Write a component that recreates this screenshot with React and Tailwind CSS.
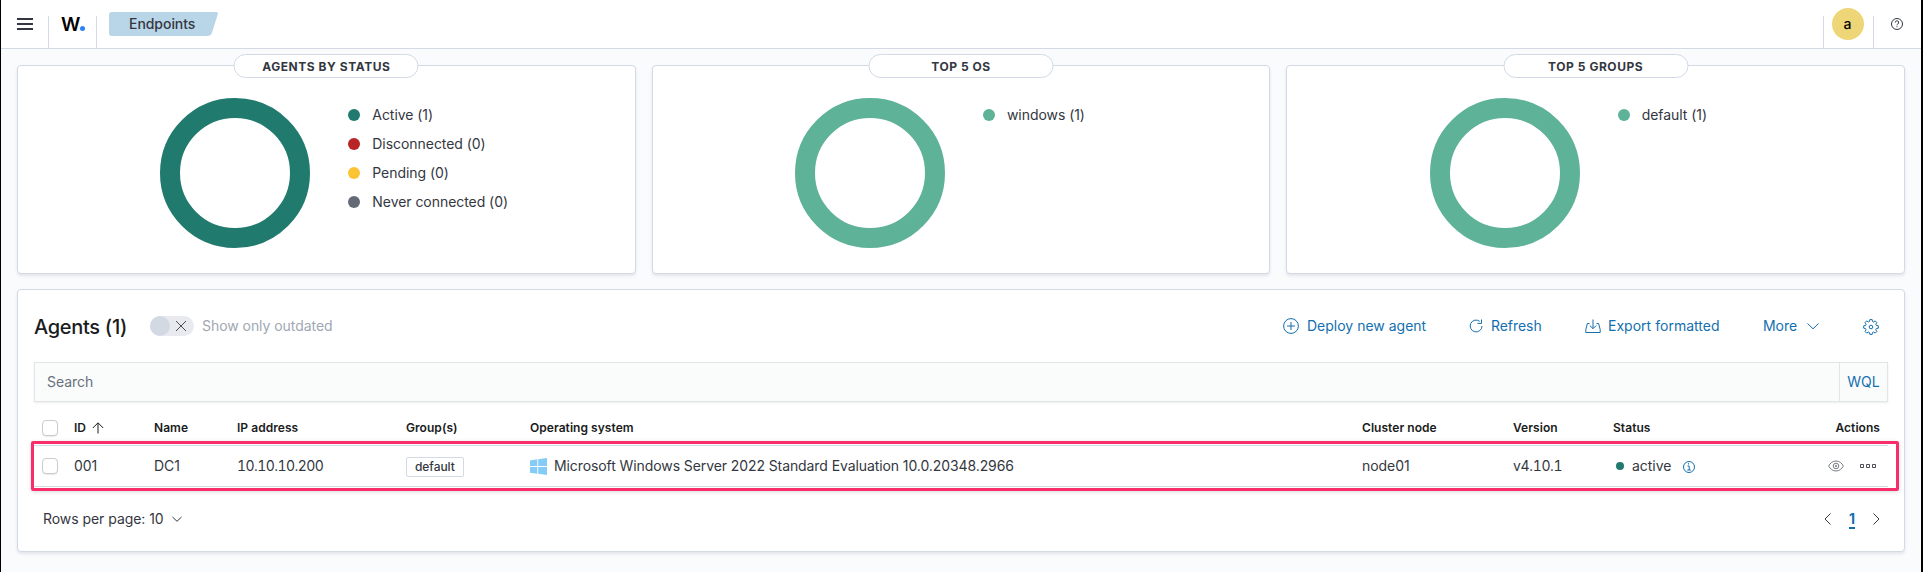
import React from "react";

const summaries = [
  {
    title: "Agents by status",
    ring: "#207a6e",
    legend: [
      { label: "Active (1)", dot: "bg-[#207a6e]" },
      { label: "Disconnected (0)", dot: "bg-[#b92427]" },
      { label: "Pending (0)", dot: "bg-[#fcc434]" },
      { label: "Never connected (0)", dot: "bg-[#656a77]" },
    ],
  },
  { title: "Top 5 OS", ring: "#5eb297", legend: [{ label: "windows (1)", dot: "bg-[#5eb297]" }] },
  { title: "Top 5 groups", ring: "#5eb297", legend: [{ label: "default (1)", dot: "bg-[#5eb297]" }] },
];

function Icon({ children, className = "" }) {
  return (
    <svg width="16" height="16" viewBox="0 0 16 16" fill="none" stroke="currentColor" className={"shrink-0 " + className}>
      {children}
    </svg>
  );
}

function SummaryCard({ title, ring, legend }) {
  return (
    <section className="relative flex h-[209px] rounded-[4px] border border-[#d3dae6] bg-white pt-[32px] shadow-[0_2px_3px_rgba(90,100,130,0.14)]">
      <h2 className="absolute top-[-12px] left-1/2 flex h-6 w-[30%] -translate-x-1/2 items-center justify-center rounded-full border border-[#d3dae6] bg-white pt-px text-[12px] font-bold tracking-[0.55px] text-[#343741] uppercase">
        {title}
      </h2>
      <svg width="150" height="150" viewBox="0 0 150 150" className="ml-[142.300px] shrink-0">
        <circle cx="75" cy="75" r="65" fill="none" stroke={ring} strokeWidth="20" />
      </svg>
      <ul className="mt-[2px] ml-[38px]">
        {legend.map((l) => (
          <li key={l.label} className="flex h-[29px] items-center gap-3">
            <span className={"size-3 rounded-full " + l.dot} />
            <span>{l.label}</span>
          </li>
        ))}
      </ul>
    </section>
  );
}

function Checkbox() {
  return <span className="block size-4 rounded-[4px] border border-[#c9cbcd] bg-white shadow-[0_1px_1px_rgba(0,0,0,0.08)]" />;
}

const columns =
  "grid grid-cols-[32px_80px_83px_169px_124px_832px_151px_100px_1fr] items-center pl-2 pr-2";

export default function App() {
  return (
    <div className="h-[572px] w-full overflow-hidden border-r-2 border-l border-black bg-[#fafbfd] font-['Inter',sans-serif] text-[14px] leading-5 tracking-[-0.05px] text-[#343741]">
      <header className="flex h-[49px] items-stretch border-b border-[#d3dae6] bg-white">
        <div className="flex w-[47px] items-center justify-start pl-4">
          <svg width="16" height="12" viewBox="0 0 16 12" fill="#343741">
            <path d="M0 0h16v2H0zM0 5h16v2H0zM0 10h16v2H0z" />
          </svg>
        </div>
        <div className="mt-4 w-px bg-[#d3dae6]" />
        <div className="flex w-[47px] items-center pl-[12px]">
          <span className="text-[19px] leading-none font-semibold tracking-[-0.5px] text-black">W</span>
          <span className="mt-[9px] size-[5px] shrink-0 rounded-full bg-[#2d82f7]" />
        </div>
        <div className="mt-4 w-px bg-[#d3dae6]" />
        <nav className="relative mt-3 ml-3 flex h-6 w-[109px] items-center">
          <svg width="109" height="24" viewBox="0 0 109 24" className="absolute inset-0" fill="#b9d6e8">
            <path d="M3 0h104q2.600 0 1.800 2.300l-6 19Q101.800 24 99 24H3q-3 0-3-3V3q0-3 3-3z" />
          </svg>
          <span className="relative pl-5 font-medium">Endpoints</span>
        </nav>
        <div className="ml-auto flex">
          <div className="mt-4 w-px bg-[#d3dae6]" />
          <div className="flex w-[49px] items-center justify-center pr-[2px]">
            <span className="flex size-8 items-center justify-center rounded-full bg-[#eed678] font-medium text-black">a</span>
          </div>
          <div className="mt-4 w-px bg-[#d3dae6]" />
          <div className="flex w-[47px] items-center justify-center pr-[2px]">
            <Icon>
              <circle cx="8" cy="8" r="5.500" />
              <path d="M6.300 6.500a1.700 1.700 0 1 1 2.500 1.500c-.6.350-.8.600-.8 1.300M8 10.300v1" />
            </Icon>
          </div>
        </div>
      </header>

      <main className="px-4 pt-4">
        <div className="grid grid-cols-3 gap-4">
          {summaries.map((s) => (
            <SummaryCard key={s.title} {...s} />
          ))}
        </div>

        <section className="mt-[15px] h-[263px] rounded-[4px] border border-[#d3dae6] bg-white px-4 shadow-[0_2px_3px_rgba(90,100,130,0.14)]">
          <div className="flex h-[72px] items-center">
            <h1 className="mt-px w-[116px] text-[20px] font-medium tracking-[-0.3px] text-[#1a1c21]">Agents (1)</h1>
            <div className="flex h-5 w-11 items-center rounded-full bg-[#e8eaef]">
              <span className="size-5 rounded-full bg-[#d3d9e3]" />
              <Icon className="ml-[3px] text-[#4a4d55]">
                <path d="M3 3l10 10M13 3L3 13" />
              </Icon>
            </div>
            <span className="ml-2 text-[#a0a7b3]">Show only outdated</span>

            <div className="ml-auto flex items-center text-[#146fae]">
              <button className="flex items-center gap-2">
                <Icon>
                  <circle cx="8" cy="8" r="7.400" />
                  <path d="M8 4v8M4 8h8" />
                </Icon>
                <span className="w-[161px] text-left tracking-normal">Deploy new agent</span>
              </button>
              <button className="flex items-center gap-[7px]">
                <Icon>
                  <path d="M11.700 3.300A5.900 5.900 0 1 0 14 8M13.500 1.500v3.900H9.500" />
                </Icon>
                <span className="w-[94px] text-left">Refresh</span>
              </button>
              <button className="flex items-center gap-[7px]">
                <Icon>
                  <path d="M8 1.500v9M4.800 7.500L8 10.700l3.200-3.200M4.500 5.500H2.400L.8 11.500v3h14.400v-3l-1.600-6h-2.100" />
                </Icon>
                <span className="w-[155px] text-left tracking-[0.02px]">Export formatted</span>
              </button>
              <button className="flex items-center">
                <span className="w-[42px] text-left">More</span>
                <Icon>
                  <path d="M2.500 5.500L8 10.800l5.500-5.300" />
                </Icon>
              </button>
              <button className="mt-[2px] mr-[9px] ml-[42px]">
                <Icon>
                  <path
                    d="M6.800.6h2.400l.3 1.900 1.100.5 1.600-1.100 1.700 1.700L12.800 5.200l.5 1.200 2 .4v2.400l-2 .4-.5 1.200 1.100 1.600-1.700 1.700-1.600-1.100-1.100.5-.3 1.900H6.800l-.4-1.900-1.100-.5-1.600 1.100L2 12.400l1.100-1.600-.5-1.200-1.900-.4V6.800l1.900-.4.5-1.200L2 3.600l1.700-1.700L5.300 3l1.100-.5z"
                    strokeLinejoin="round"
                  />
                  <circle cx="8" cy="8" r="1.800" />
                </Icon>
              </button>
            </div>
          </div>

          <div className="flex h-10 border border-[#e2e6e8] bg-[#fafcfc] shadow-[0_1px_2px_rgba(0,0,0,0.08)]">
            <div className="flex grow items-center pl-3 text-[#69707d]">Search</div>
            <button className="flex w-12 items-center justify-center border-l border-[#e2e6e8] text-[#146fae]">WQL</button>
          </div>

          <div className={columns + " mt-[8px] h-[35px] pt-px text-[12px] font-semibold tracking-[0.05px] text-[#1a1c21]"}>
            <Checkbox />
            <span className="flex items-center">
              ID
              <Icon className="ml-[4px]">
                <path d="M8 13.500V3M2.800 8L8 2.800 13.200 8" />
              </Icon>
            </span>
            <span>Name</span>
            <span>IP address</span>
            <span>Group(s)</span>
            <span>Operating system</span>
            <span>Cluster node</span>
            <span>Version</span>
            <span className="flex justify-between">
              <span>Status</span>
              <span>Actions</span>
            </span>
          </div>

          <div className={columns + " relative h-[42px] border-y border-[#d3dae6]"}>
            <div className="absolute -top-[5px] -right-[11px] -bottom-[5px] -left-[3px] rounded-[2px] border-3 border-[#fa2d6b] shadow-[0_1px_4px_rgba(0,0,0,0.15)]" />
            <Checkbox />
            <span>001</span>
            <span>DC1</span>
            <span className="tracking-[-0.55px] tabular-nums">10.10.10.200</span>
            <span className="flex">
              <span className="mt-[1px] h-5 rounded-[2px] border border-[#d3dae6] px-2 text-[12px] leading-[18px] font-medium">default</span>
            </span>
            <span className="flex items-center gap-[7px] tracking-[-0.09px]">
              <svg width="17" height="17" viewBox="0 0 17 17" fill="#84cbf5">
                <path d="M0 2.400L7.300 1.300V8H0zM8.200 1.200L17 0v8H8.200zM0 8.900h7.300v6.800L0 14.700zM8.200 8.900H17V17l-8.800-1.200z" />
              </svg>
              Microsoft Windows Server 2022 Standard Evaluation 10.0.20348.2966
            </span>
            <span>node01</span>
            <span className="tracking-[-0.35px] tabular-nums">v4.10.1</span>
            <span className="flex items-center pl-[3px]">
              <span className="size-2 rounded-full bg-[#207a6e]" />
              <span className="w-[57px] pl-2">active</span>
              <Icon className="mt-[2px] text-[#146fae]">
                <circle cx="8" cy="8" r="5.500" />
                <path d="M6.500 7h1.700v4M6.300 11h3.600M7.500 4.200v1.300" />
              </Icon>
              <span className="ml-auto flex gap-4 pr-1 text-[#7b7e85]">
                <Icon>
                  <path d="M.6 8C2.200 5 4.900 3 8 3s5.800 2 7.400 5c-1.600 3-4.300 5-7.400 5S2.200 11 .6 8z" />
                  <circle cx="8" cy="8" r="2.800" />
                  <circle cx="8" cy="8" r=".8" />
                </Icon>
                <Icon className="text-[#4a4d55]">
                  <path d="M.5 6.500h3v3h-3zM6.500 6.500h3v3h-3zM12.500 6.500h3v3h-3z" />
                </Icon>
              </span>
            </span>
          </div>

          <div className="mt-[22px] flex h-5 items-center pr-1 pl-[9px]">
            <span className="w-[126px]">Rows per page: 10</span>
            <Icon>
              <path d="M3.500 6L8 10.300 12.500 6" />
            </Icon>
            <span className="ml-auto flex items-center">
              <Icon>
                <path d="M10.500 2.500L5 8l5.500 5.500" />
              </Icon>
              <span className="mx-[12px] w-2 text-center font-bold text-[#146fae] underline decoration-2 underline-offset-3">1</span>
              <Icon>
                <path d="M5.500 2.500L11 8l-5.500 5.500" />
              </Icon>
            </span>
          </div>
        </section>
      </main>
    </div>
  );
}
